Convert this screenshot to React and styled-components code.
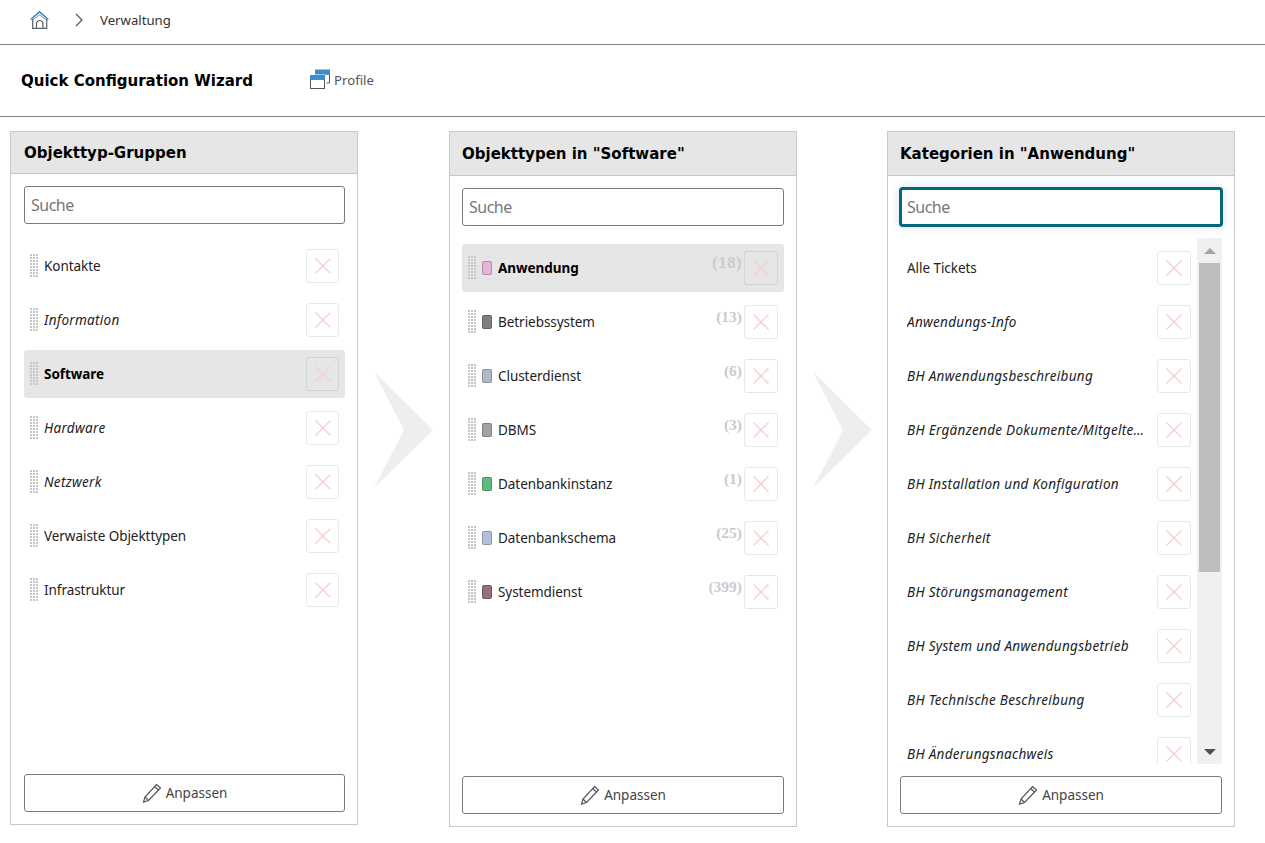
import React from "react";
import styled, { createGlobalStyle } from "styled-components";

const Global = createGlobalStyle`
  html, body { margin: 0; padding: 0; background: #fff; }
  body { font-family: "Noto Sans", "Open Sans", sans-serif; font-size: 14px; color: #222; }
  * { box-sizing: border-box; }
`;

const Page = styled.div`
  width: 1265px;
  height: 843px;
  overflow: hidden;
  display: flex;
  flex-direction: column;
`;

const Breadcrumb = styled.nav`
  height: 45px;
  flex: none;
  display: flex;
  align-items: center;
  padding: 0 0 5px 29px;
  border-bottom: 1px solid #808080;
`;

const Crumb = styled.span`
  font-size: 13.2px;
  color: #333;
  margin-left: 16px;
`;

const ChevronBox = styled.span`
  display: flex;
  margin-left: 25px;
`;

const TitleBar = styled.header`
  height: 72px;
  flex: none;
  display: flex;
  align-items: center;
  padding: 1px 0 0 21px;
  border-bottom: 1px solid #808080;
`;

const Title = styled.h1`
  margin: 0;
  width: 288px;
  font-family: "DejaVu Sans", sans-serif;
  font-size: 15px;
  font-weight: 700;
  color: #000;
`;

const ProfileLink = styled.a`
  display: flex;
  align-items: center;
  gap: 4px;
  margin-top: -3px;
  font-size: 13.2px;
  color: #555;
`;

const Columns = styled.main`
  display: flex;
  align-items: flex-start;
  padding: 14px 0 0 10px;
`;

const Panel = styled.section`
  width: 348px;
  height: ${(p) => (p.$compact ? "694px" : "696px")};
  flex: none;
  display: flex;
  flex-direction: column;
  border: 1px solid #c8c8c8;
`;

const PanelHeader = styled.h2`
  height: ${(p) => (p.$compact ? "42px" : "44px")};
  flex: none;
  margin: 0;
  padding: 0 12px 0 ${(p) => (p.$compact ? "13px" : "12px")};
  display: flex;
  align-items: center;
  background: #e5e6e5;
  border-bottom: 1px solid #c8c8c8;
  font-family: "DejaVu Sans", sans-serif;
  font-size: 15px;
  font-weight: 700;
  color: #000;
  white-space: pre;
`;

const PanelBody = styled.div`
  flex: 1;
  min-height: 0;
  display: flex;
  flex-direction: column;
  padding: 12px 12px 12px ${(p) => (p.$compact ? "13px" : "12px")};
`;

const Search = styled.input`
  height: 38px;
  width: 100%;
  flex: none;
  padding: 0 ${(p) => (p.$focused ? "5px" : "6px")};
  font: 16px "Noto Sans", sans-serif;
  letter-spacing: -0.5px;
  color: #333;
  background: #fff;
  border: ${(p) => (p.$focused ? "2px solid #04667f" : "1px solid #7a7a7a")};
  border-radius: 3px;
  outline: none;
  box-shadow: ${(p) => (p.$focused ? "0 0 0 1px #04667f, 0 0 8px 1px rgba(4,102,127,.2)" : "none")};
  &::placeholder { color: #777; opacity: 1; }
`;

const ListFrame = styled.div`
  flex: 1;
  min-height: 0;
  margin-top: 12px;
  display: flex;
  overflow: hidden;
`;

const List = styled.ul`
  list-style: none;
  flex: 1;
  min-width: 0;
  margin: 0;
  padding: 6px 0 0;
  display: flex;
  flex-direction: column;
  gap: 6px;
  overflow: hidden;
`;

const Row = styled.li`
  height: 48px;
  flex: none;
  display: flex;
  align-items: center;
  padding: 0 6px 0 ${(p) => (p.$plain ? "7px" : "6px")};
  border-radius: 3px;
  background: ${(p) => (p.$active ? "#e5e6e5" : "transparent")};
  font-style: ${(p) => (p.$italic ? "italic" : "normal")};
  font-weight: ${(p) => (p.$active ? 700 : 400)};
  color: ${(p) => (p.$active ? "#000" : "#222")};
`;

const DragHandle = styled.span`
  width: 9px;
  height: 23px;
  flex: none;
  margin-right: 5px;
  margin-top: -1px;
  background: repeating-linear-gradient(180deg, #c6c6c6 0 2px, transparent 2px 3px);
  -webkit-mask-image: repeating-linear-gradient(90deg, #000 0 2px, transparent 2px 3px);
  mask-image: repeating-linear-gradient(90deg, #000 0 2px, transparent 2px 3px);
`;

const Swatch = styled.span`
  width: 10px;
  height: 14px;
  flex: none;
  margin-right: 6px;
  border-radius: 2px;
  background: ${(p) => p.$color};
  border: 1px solid rgba(0, 0, 0, 0.22);
`;

const Label = styled.span`
  flex: 1;
  min-width: 0;
  padding-right: 8px;
  font-size: 13.5px;
  letter-spacing: ${(p) => (p.$italic ? "0.3px" : "-0.05px")};
  white-space: nowrap;
  overflow: hidden;
  text-overflow: ellipsis;
`;

const Count = styled.span`
  align-self: flex-start;
  margin: ${(p) => (p.$active ? "9px" : "10px")} 2px 0 0;
  font-family: "Liberation Serif", serif;
  font-size: ${(p) => (p.$active ? "17px" : "15.5px")};
  font-style: normal;
  font-weight: 700;
  letter-spacing: ${(p) => (p.$active ? "0.4px" : "0")};
  color: #c9cbcc;
`;

const DeleteButton = styled.button`
  width: ${(p) => (p.$narrow ? "33px" : "34px")};
  height: 34px;
  flex: none;
  padding: 0;
  display: flex;
  align-items: center;
  justify-content: center;
  background: ${(p) => (p.$active ? "#e5e6e5" : "#fff")};
  border: 1px solid ${(p) => (p.$active ? "#d3d3d3" : "#e8e8e8")};
  border-radius: 3px;
`;

const ScrollBar = styled.div`
  width: 25px;
  flex: none;
  display: flex;
  flex-direction: column;
  align-items: center;
  background: #f0f0f0;
`;

const ScrollArrow = styled.span`
  height: 25px;
  flex: none;
  display: flex;
  align-items: center;
  justify-content: center;
  &::before {
    content: "";
    border-left: 6px solid transparent;
    border-right: 6px solid transparent;
    ${(p) => (p.$down ? "border-top: 6px solid #505050;" : "border-bottom: 6px solid #a3a3a3;")}
  }
`;

const ScrollThumb = styled.span`
  width: 21px;
  height: 309px;
  flex: none;
  background: #bdbdbd;
`;

const ScrollTrack = styled.span`
  flex: 1;
`;

const FooterButton = styled.button`
  height: 38px;
  width: 100%;
  flex: none;
  margin-top: 12px;
  display: flex;
  align-items: center;
  justify-content: center;
  gap: 4px;
  background: #fff;
  border: 1px solid #7a7a7a;
  border-radius: 3px;
  font: 13.5px "Noto Sans", sans-serif;
  color: #444;
`;

const ArrowGap = styled.div`
  flex: none;
  width: ${(p) => p.$width}px;
  padding: 241px 0 0 ${(p) => p.$inset}px;
  display: flex;
`;

const Home = () => (
  <svg width="20" height="20" viewBox="0 0 20 20" fill="none">
    <path d="M3.700 9v9.300h14V9M7.500 18.300V13a3.300 3.300 0 0 1 6.400 0v5.300" stroke="#5c5f63" strokeWidth="1.200" />
    <path d="M4.500 9.500 10.500 4.800l6 4.700" stroke="#8a8d90" strokeWidth="1" />
    <path d="M1.700 9.500 10.500 1.800l8.800 7.700" stroke="#3d85c6" strokeWidth="1.600" />
  </svg>
);

const Chevron = () => (
  <svg width="10" height="14" viewBox="0 0 10 14" fill="none">
    <path d="M2 1 8 7l-6 6" stroke="#555" strokeWidth="1.200" />
  </svg>
);

const WindowsIcon = () => (
  <svg width="21" height="21" viewBox="0 0 21 21" fill="none">
    <path d="M16 5H20.500V14H17.500" stroke="#555" />
    <rect x="6" y="0.500" width="15" height="5" fill="#3f8ccb" />
    <rect x="1.500" y="6.500" width="14" height="13" fill="#fff" stroke="#555" />
    <rect x="1" y="6" width="15" height="5" fill="#3f8ccb" />
  </svg>
);

const Cross = () => (
  <svg width="18" height="18" viewBox="0 0 18 18" fill="none">
    <path d="M1.500 1.500l15 15M16.500 1.500l-15 15" stroke="#f7cfcf" strokeWidth="1.400" />
  </svg>
);

const Pencil = () => (
  <svg width="20" height="20" viewBox="0 0 20 20" fill="none" stroke="#555" strokeWidth="1.200">
    <path d="M14.500 1.500 18.500 5 6.500 17.500 1.500 19l1.500-5z" />
    <path d="M12.500 3.500l4 3.500M3 14l3.500 3.500" />
  </svg>
);

const PanelArrow = () => (
  <svg width="60" height="118" viewBox="0 0 60 118" fill="#eeeeee">
    <path d="M0 0 59 58 0 116 30 58z" />
  </svg>
);

const groups = [
  { name: "Kontakte" },
  { name: "Information", italic: true },
  { name: "Software", active: true },
  { name: "Hardware", italic: true },
  { name: "Netzwerk", italic: true },
  { name: "Verwaiste Objekttypen" },
  { name: "Infrastruktur" },
];

const types = [
  { name: "Anwendung", color: "#e4b5d6", count: 18, active: true },
  { name: "Betriebssystem", color: "#7f7f7d", count: 13 },
  { name: "Clusterdienst", color: "#b1b8c6", count: 6 },
  { name: "DBMS", color: "#a3a3a3", count: 3 },
  { name: "Datenbankinstanz", color: "#5fbb7d", count: 1 },
  { name: "Datenbankschema", color: "#afc0d8", count: 25 },
  { name: "Systemdienst", color: "#94707f", count: 399 },
];

const categories = [
  { name: "Alle Tickets" },
  { name: "Anwendungs-Info", italic: true },
  { name: "BH Anwendungsbeschreibung", italic: true },
  { name: "BH Ergänzende Dokumente/Mitgeltende Unterlagen", italic: true },
  { name: "BH Installation und Konfiguration", italic: true },
  { name: "BH Sicherheit", italic: true },
  { name: "BH Störungsmanagement", italic: true },
  { name: "BH System und Anwendungsbetrieb", italic: true },
  { name: "BH Technische Beschreibung", italic: true },
  { name: "BH Änderungsnachweis", italic: true },
];

const Footer = () => (
  <FooterButton>
    <Pencil />
    Anpassen
  </FooterButton>
);

export default function App() {
  return (
    <Page>
      <Global />
      <Breadcrumb>
        <Home />
        <ChevronBox><Chevron /></ChevronBox>
        <Crumb>Verwaltung</Crumb>
      </Breadcrumb>
      <TitleBar>
        <Title>Quick Configuration Wizard</Title>
        <ProfileLink><WindowsIcon />Profile</ProfileLink>
      </TitleBar>
      <Columns>
        <Panel $compact>
          <PanelHeader $compact>Objekttyp-Gruppen</PanelHeader>
          <PanelBody $compact>
            <Search placeholder="Suche" />
            <ListFrame>
              <List>
                {groups.map((g) => (
                  <Row key={g.name} $italic={g.italic} $active={g.active}>
                    <DragHandle />
                    <Label $italic={g.italic}>{g.name}</Label>
                    <DeleteButton $narrow $active={g.active}><Cross /></DeleteButton>
                  </Row>
                ))}
              </List>
            </ListFrame>
            <Footer />
          </PanelBody>
        </Panel>
        <ArrowGap $width={91} $inset={16}><PanelArrow /></ArrowGap>
        <Panel>
          <PanelHeader>Objekttypen in "Software"</PanelHeader>
          <PanelBody>
            <Search placeholder="Suche" />
            <ListFrame>
              <List>
                {types.map((t) => (
                  <Row key={t.name} $active={t.active}>
                    <DragHandle />
                    <Swatch $color={t.color} />
                    <Label>{t.name}</Label>
                    <Count $active={t.active}>({t.count})</Count>
                    <DeleteButton $active={t.active}><Cross /></DeleteButton>
                  </Row>
                ))}
              </List>
            </ListFrame>
            <Footer />
          </PanelBody>
        </Panel>
        <ArrowGap $width={90} $inset={16}><PanelArrow /></ArrowGap>
        <Panel>
          <PanelHeader>Kategorien in "Anwendung"</PanelHeader>
          <PanelBody>
            <Search $focused placeholder="Suche" />
            <ListFrame>
              <List>
                {categories.map((c) => (
                  <Row key={c.name} $plain $italic={c.italic}>
                    <Label $italic={c.italic}>{c.name}</Label>
                    <DeleteButton><Cross /></DeleteButton>
                  </Row>
                ))}
              </List>
              <ScrollBar>
                <ScrollArrow />
                <ScrollThumb />
                <ScrollTrack />
                <ScrollArrow $down />
              </ScrollBar>
            </ListFrame>
            <Footer />
          </PanelBody>
        </Panel>
      </Columns>
    </Page>
  );
}
